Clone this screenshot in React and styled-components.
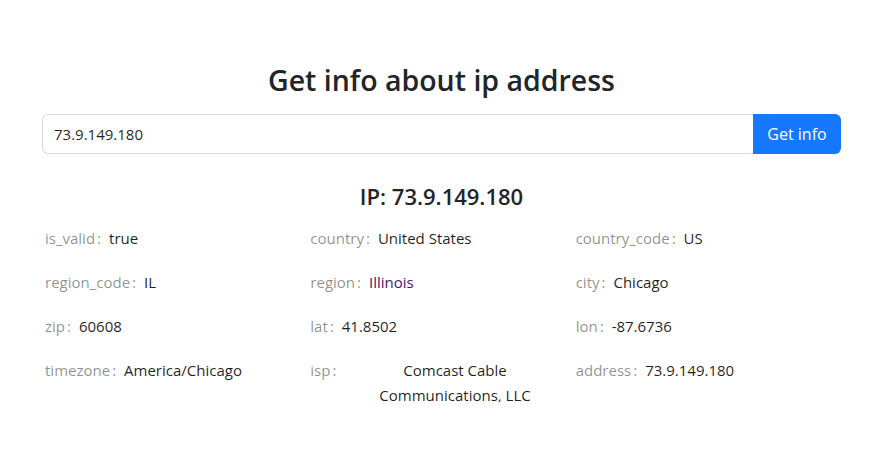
import React, { useState } from "react";
import styled, { createGlobalStyle } from "styled-components";

const GlobalStyle = createGlobalStyle`
  body {
    margin: 0;
    background: #fff;
    font-family: "Segoe UI", "Open Sans", "Noto Sans", sans-serif;
    color: #212529;
  }
`;

const Page = styled.div`
  width: 799px;
  margin-left: 42px;
  padding-top: 60px;
  text-align: center;
`;

const Title = styled.h2`
  margin: 0 0 14px;
  font-size: 28.5px;
  font-weight: 600;
  line-height: 40px;
  color: #212529;
`;

const SearchRow = styled.form`
  display: flex;
  height: 40px;
`;

const Input = styled.input`
  flex: 1;
  min-width: 0;
  box-sizing: border-box;
  border: 1px solid #d9d9d9;
  border-right: none;
  border-radius: 6px 0 0 6px;
  padding: 0 11px;
  font-family: inherit;
  font-size: 15px;
  color: rgba(0, 0, 0, 0.88);
  outline: none;
`;

const SubmitButton = styled.button`
  width: 88px;
  border: none;
  border-radius: 0 6px 6px 0;
  background: #1677ff;
  color: #fff;
  font-family: inherit;
  font-size: 16px;
  cursor: pointer;
`;

const IpTitle = styled.h3`
  margin: 26px 0 14px;
  font-size: 22px;
  font-weight: 600;
  line-height: 32px;
  color: #212529;
`;

const Grid = styled.div`
  display: grid;
  grid-template-columns: repeat(3, 1fr);
  grid-auto-rows: 44px;
  margin-left: 3px;
`;

const Item = styled.div`
  display: flex;
  align-items: flex-start;
  padding-right: 10px;
  font-size: 15px;
  line-height: 25px;
`;

const Label = styled.span`
  flex: none;
  color: rgba(0, 0, 0, 0.45);
  &::after {
    content: ":";
    margin: 0 8px 0 2px;
  }
`;

const Value = styled.span`
  flex: 0 1 auto;
  color: ${(p) => (p.$visited ? "#48136a" : "rgba(0, 0, 0, 0.88)")};
`;

const data = [
  ["is_valid", "true"],
  ["country", "United States"],
  ["country_code", "US"],
  ["region_code", "IL"],
  ["region", "Illinois", true],
  ["city", "Chicago"],
  ["zip", "60608"],
  ["lat", "41.8502"],
  ["lon", "-87.6736"],
  ["timezone", "America/Chicago"],
  ["isp", "Comcast Cable Communications, LLC"],
  ["address", "73.9.149.180"],
];

const App = () => {
  const [ip, setIp] = useState("73.9.149.180");

  return (
    <>
      <GlobalStyle />
      <Page>
        <Title>Get info about ip address</Title>
        <SearchRow onSubmit={(e) => e.preventDefault()}>
          <Input value={ip} onChange={(e) => setIp(e.target.value)} />
          <SubmitButton type="submit">Get info</SubmitButton>
        </SearchRow>
        <IpTitle>IP: 73.9.149.180</IpTitle>
        <Grid>
          {data.map(([label, value, visited]) => (
            <Item key={label}>
              <Label>{label}</Label>
              <Value $visited={visited}>{value}</Value>
            </Item>
          ))}
        </Grid>
      </Page>
    </>
  );
};

export default App;
